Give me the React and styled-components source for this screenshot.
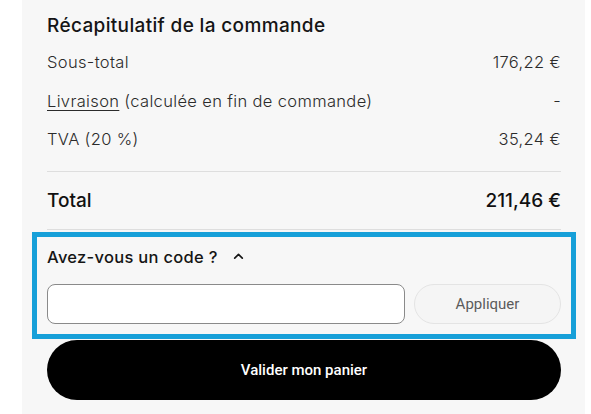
import styled, { createGlobalStyle } from "styled-components";

const GlobalStyle = createGlobalStyle`
  body {
    margin: 0;
    background: #ffffff;
    font-family: Inter, "Liberation Sans", sans-serif;
  }
`;

const Page = styled.div`
  display: flex;
  padding-left: 22px;
  height: 414px;
  overflow: hidden;
`;

const Panel = styled.section`
  width: 563px;
  box-sizing: border-box;
  padding: 14px 24px 0 25px;
  background: #f7f7f7;
  display: flex;
  flex-direction: column;
`;

const Title = styled.h2`
  margin: 0 0 5px;
  font-size: 19px;
  line-height: 24px;
  font-weight: 500;
  letter-spacing: 0.35px;
  color: #151515;
`;

const Row = styled.div`
  display: flex;
  justify-content: space-between;
  align-items: center;
  height: 38.5px;
  font-size: 16.5px;
  font-weight: 300;
  letter-spacing: 0.35px;
  color: #2b2b2b;
`;

const Lines = styled.div`
  padding-bottom: 12px;
  border-bottom: 1px solid #dedede;
`;

const Link = styled.a`
  color: inherit;
  text-decoration: underline;
  text-underline-offset: 3px;
`;

const TotalRow = styled.div`
  display: flex;
  justify-content: space-between;
  align-items: center;
  height: 57px;
  border-bottom: 1px solid #dedede;
  font-size: 19px;
  font-weight: 500;
  color: #111;
`;

const CodeBox = styled.div`
  margin-top: 17px;
  outline: 5px solid #17a0d9;
  outline-offset: 10px;
  display: flex;
  flex-direction: column;
  gap: 17px;
`;

const CodeHeader = styled.button`
  display: flex;
  align-items: center;
  gap: 14px;
  padding: 0;
  border: 0;
  background: none;
  font-family: inherit;
  font-size: 16.5px;
  line-height: 20px;
  font-weight: 500;
  letter-spacing: 0.3px;
  color: #151515;
  cursor: pointer;
`;

const CodeForm = styled.div`
  display: flex;
  gap: 9px;
`;

const CodeInput = styled.input`
  flex: 1;
  height: 40px;
  box-sizing: border-box;
  border: 1px solid #8a8a8a;
  border-radius: 8px;
  background: #fff;
`;

const ApplyButton = styled.button`
  width: 147px;
  height: 40px;
  border: 1px solid #e4e4e4;
  border-radius: 20px;
  background: #f5f5f5;
  font-family: Roboto, "Liberation Sans", sans-serif;
  font-size: 15px;
  color: #5b5b5b;
`;

const SubmitButton = styled.button`
  margin-top: 16px;
  height: 60px;
  border: 0;
  border-radius: 30px;
  background: #000;
  color: #fff;
  font-family: Roboto, "Liberation Sans", sans-serif;
  font-size: 15px;
  font-weight: 500;
`;

const Chevron = () => (
  <svg width="13" height="13" viewBox="0 0 24 24" fill="none" stroke="#151515" strokeWidth="3" strokeLinecap="round" strokeLinejoin="round">
    <path d="M5 15l7-7 7 7" />
  </svg>
);

export default function App() {
  return (
    <>
      <GlobalStyle />
      <Page>
        <Panel>
          <Title>Récapitulatif de la commande</Title>
          <Lines>
            <Row>
              <span>Sous-total</span>
              <span>176,22 €</span>
            </Row>
            <Row>
              <span>
                <Link>Livraison</Link> (calculée en fin de commande)
              </span>
              <span>-</span>
            </Row>
            <Row>
              <span>TVA (20 %)</span>
              <span>35,24 €</span>
            </Row>
          </Lines>
          <TotalRow>
            <span>Total</span>
            <span>211,46 €</span>
          </TotalRow>
          <CodeBox>
            <CodeHeader>
              Avez-vous un code ? <Chevron />
            </CodeHeader>
            <CodeForm>
              <CodeInput type="text" />
              <ApplyButton>Appliquer</ApplyButton>
            </CodeForm>
          </CodeBox>
          <SubmitButton>Valider mon panier</SubmitButton>
        </Panel>
      </Page>
    </>
  );
}
